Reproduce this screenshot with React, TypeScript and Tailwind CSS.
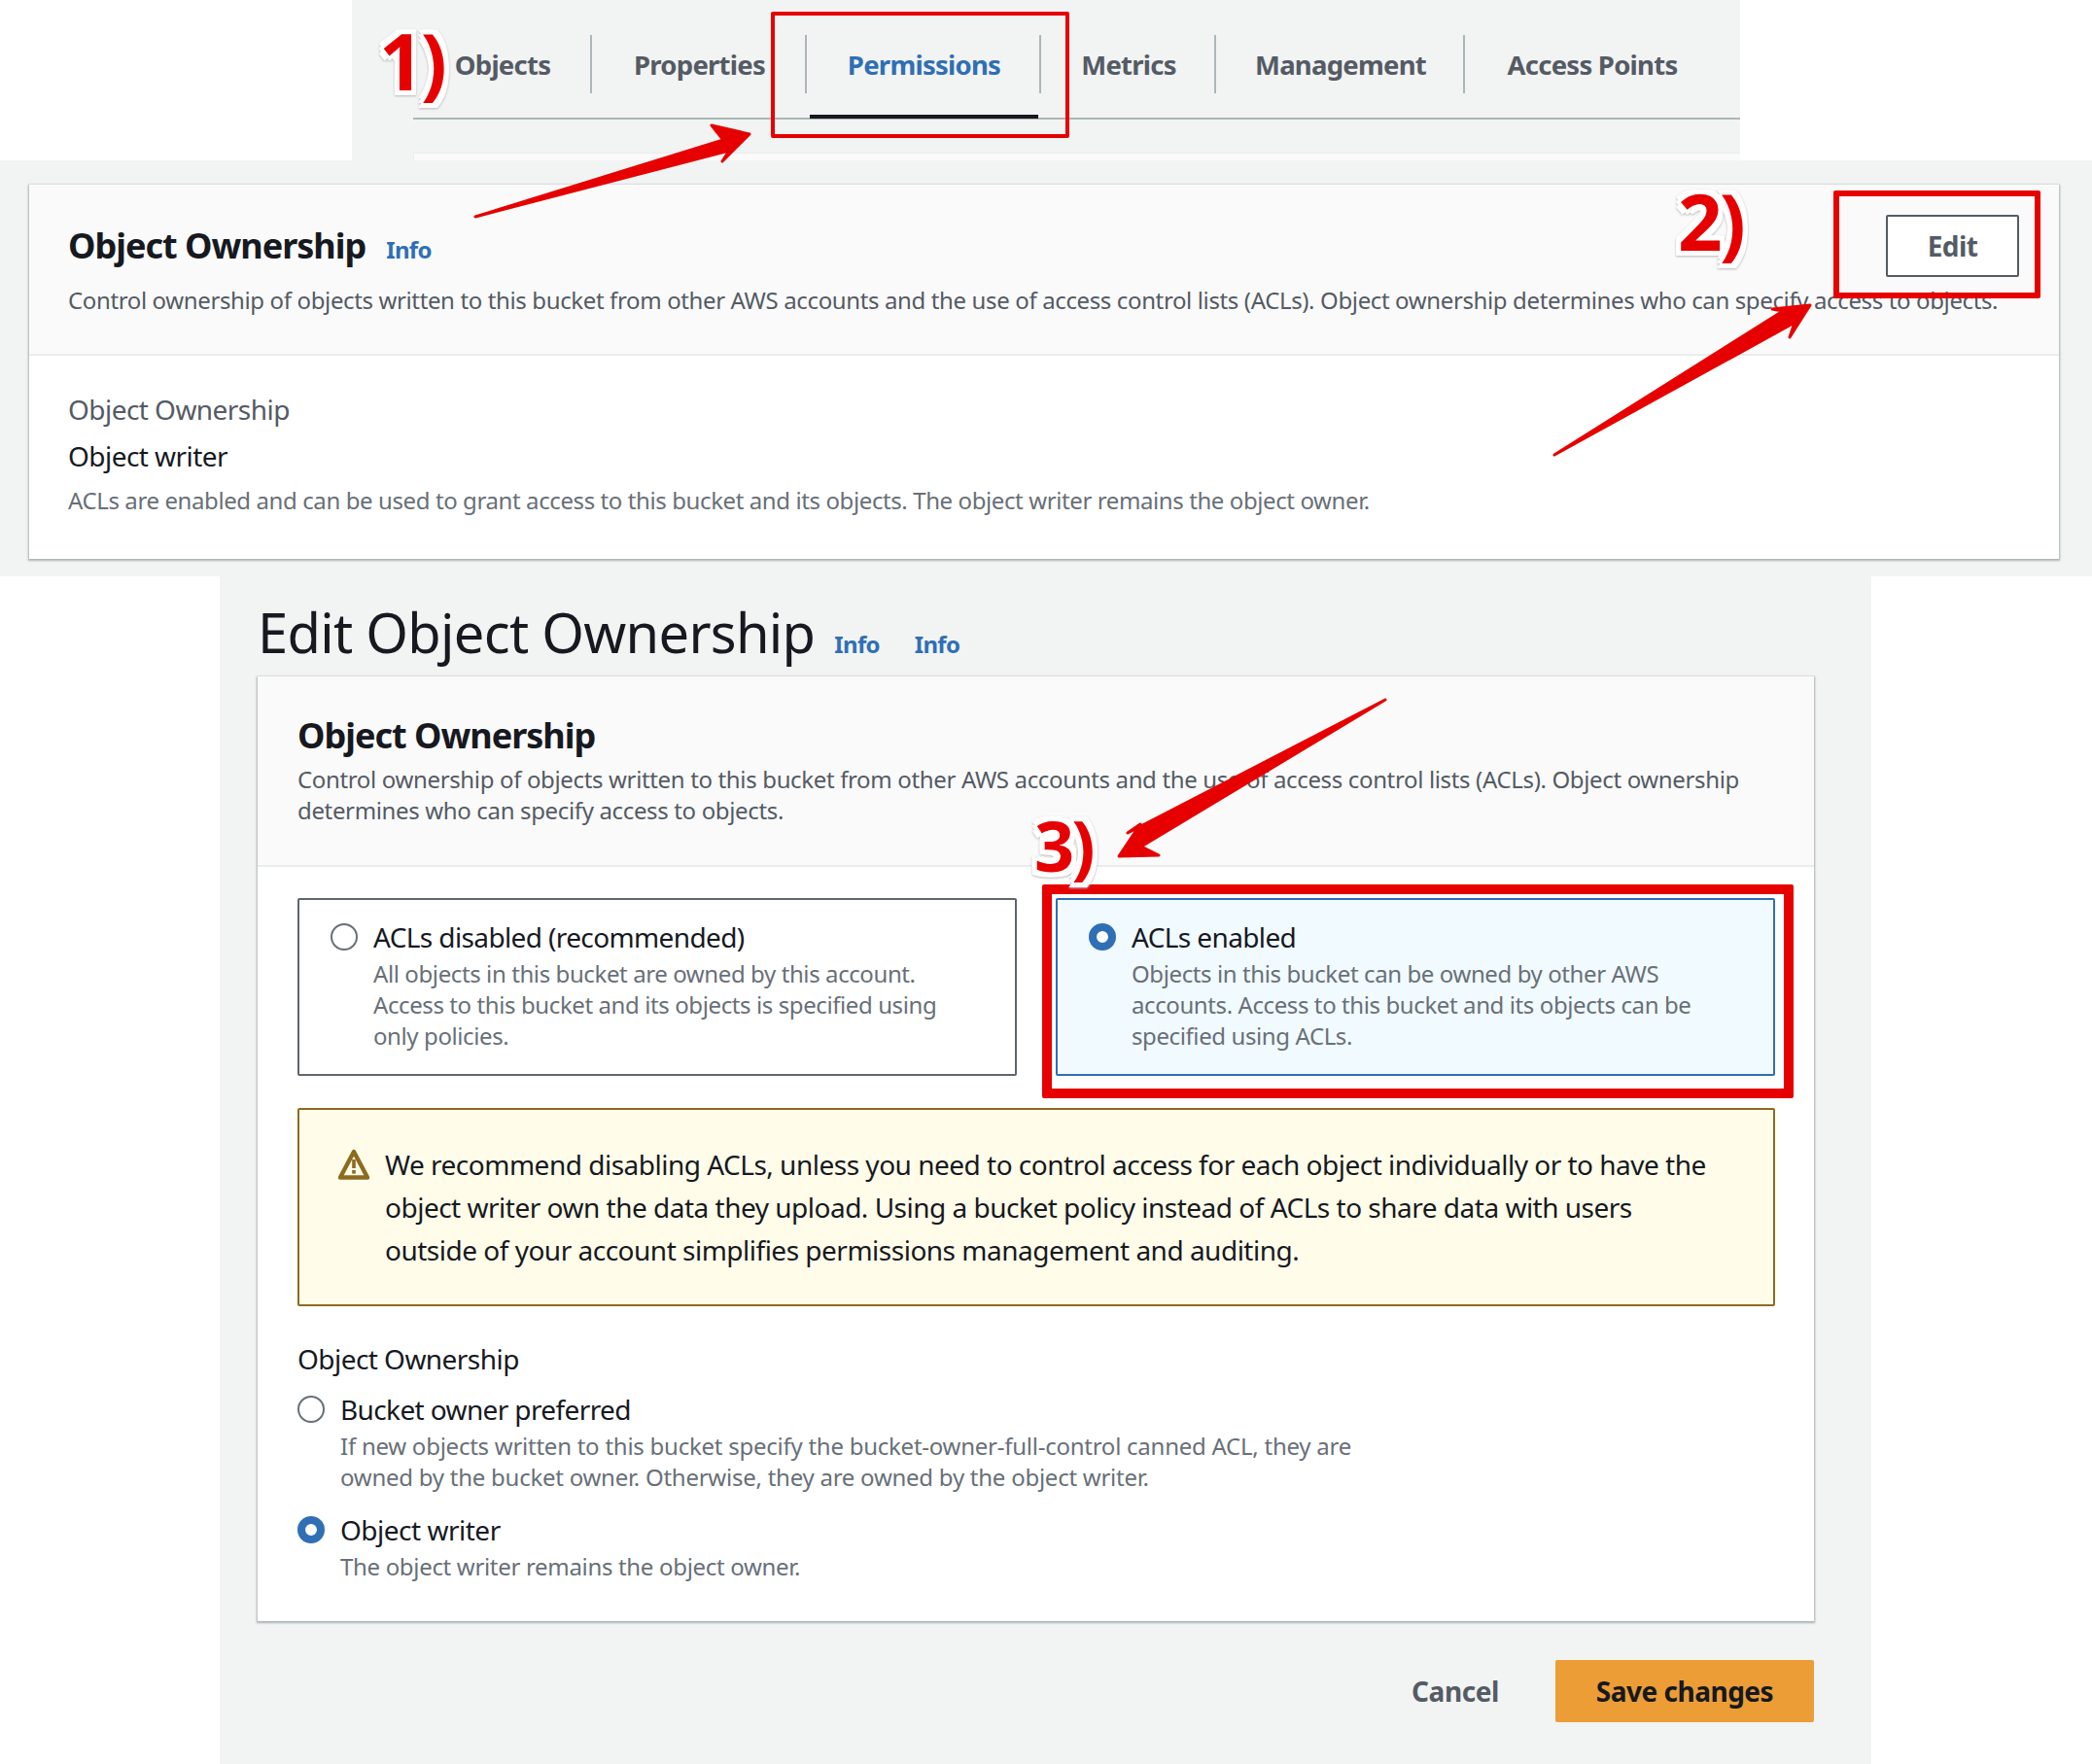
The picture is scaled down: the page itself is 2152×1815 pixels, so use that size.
const font = "font-['Noto_Sans',sans-serif]";

const tabs = [
  { label: "Objects", width: "w-[184px]" },
  { label: "Properties", width: "w-[221px]" },
  { label: "Permissions", width: "w-[241px]" },
  { label: "Metrics", width: "w-[180px]" },
  { label: "Management", width: "w-[256px]" },
  { label: "Access Points", width: "w-[260px]" },
];

function Tabs() {
  return (
    <div className="h-[165px] bg-white">
      <div className="ml-[362px] flex h-full w-[1428px] flex-col bg-[#f2f3f3] pl-[63px]">
        <div className="mt-[36px] flex h-[87px] items-start border-b-2 border-[#aab7b8]">
          {tabs.map((tab, i) => (
            <div
              key={tab.label}
              className={`relative flex h-[60px] items-center justify-center pt-[2px] pl-[2px] text-[27.5px] font-bold tracking-[-0.75px] whitespace-nowrap ${tab.width} ${
                tab.label === "Permissions" ? "text-[#2f6fb5]" : "text-[#545b64]"
              } ${i < tabs.length - 1 ? "border-r-2 border-[#aab7b8]" : ""}`}
            >
              {tab.label}
              {tab.label === "Permissions" && (
                <span className="absolute top-[82px] right-[1px] left-[3px] h-[4px] bg-[#16191f]" />
              )}
            </div>
          ))}
        </div>
        <div className="mt-[34px] h-[8px] flex-1 border-t border-l border-[#eaeded] bg-[#fafafa]" />
      </div>
    </div>
  );
}

function Info({ className = "" }: { className?: string }) {
  return <span className={`text-[24px] font-bold tracking-[-0.7px] text-[#2f6fb5] ${className}`}>Info</span>;
}

function SummaryCard() {
  return (
    <div className="h-[428px] bg-[#f2f3f3] pt-[25px] pr-[34px] pl-[30px]">
      <div className="h-[385px] bg-white shadow-[0_1px_2px_1px_rgba(0,28,36,0.3)]">
        <div className="relative h-[176px] border-b-2 border-[#eaeded] bg-[#fafafa] pt-[36px] pl-[40px]">
          <div className="flex items-baseline">
            <h2 className="text-[36px] font-bold tracking-[-1px] text-[#16191f]">Object Ownership</h2>
            <Info className="ml-[21px]" />
          </div>
          <p className="mt-[13px] text-[24px] leading-[32px] tracking-[-0.37px] whitespace-nowrap text-[#545b64]">
            Control ownership of objects written to this bucket from other AWS accounts and the use of access control
            lists (ACLs). Object ownership determines who can specify access to objects.
          </p>
          <button className="absolute top-[31px] right-[41px] h-[64px] w-[137px] rounded-[2px] border-2 border-[#545b64] bg-white text-[28px] font-bold tracking-[-0.6px] text-[#545b64]">
            Edit
          </button>
        </div>
        <div className="pt-[36px] pl-[40px]">
          <p className="text-[28px] leading-[38px] tracking-[-0.55px] text-[#545b64]">Object Ownership</p>
          <p className="mt-[10px] text-[28px] leading-[38px] tracking-[-0.55px] text-[#16191f]">Object writer</p>
          <p className="mt-[11px] text-[24px] leading-[32px] tracking-[-0.4px] text-[#687078]">
            ACLs are enabled and can be used to grant access to this bucket and its objects. The object writer remains
            the object owner.
          </p>
        </div>
      </div>
    </div>
  );
}

function Radio({ checked }: { checked?: boolean }) {
  if (checked) {
    return <span className="block h-[28px] w-[28px] shrink-0 rounded-full border-[8px] border-[#2f6fb5] bg-white" />;
  }
  return <span className="block h-[28px] w-[28px] shrink-0 rounded-full border-2 border-[#687078] bg-white" />;
}

function Tile({ title, checked, lines }: { title: string; checked?: boolean; lines: string[] }) {
  return (
    <div
      className={`h-[183px] flex-1 rounded-[2px] border-2 pt-[20px] pl-[32px] ${
        checked ? "border-[#2f6fb5] bg-[#f1faff]" : "border-[#60666e] bg-white"
      }`}
    >
      <div className="flex items-center gap-[16px]">
        <Radio checked={checked} />
        <span className="text-[28px] leading-[36px] tracking-[-0.62px] text-[#16191f]">{title}</span>
      </div>
      <div className="mt-[4px] pl-[44px] text-[24px] leading-[32px] tracking-[-0.4px] text-[#687078]">
        {lines.map((l) => (
          <p key={l}>{l}</p>
        ))}
      </div>
    </div>
  );
}

function WarningIcon() {
  return (
    <svg viewBox="0 0 32 32" className="mt-[6px] h-[32px] w-[32px] shrink-0">
      <path d="M16 3 L30 29.5 L2 29.5 Z" fill="none" stroke="#8d6b1f" strokeWidth="4.4" strokeLinejoin="round" />
      <rect x="14.2" y="11" width="3.6" height="9" fill="#8d6b1f" />
      <rect x="14.2" y="22" width="3.6" height="3.6" fill="#8d6b1f" />
    </svg>
  );
}

function EditCard() {
  return (
    <div className="h-[972px] bg-white shadow-[0_1px_2px_1px_rgba(0,28,36,0.3)]">
      <div className="h-[196px] border-b-2 border-[#eaeded] bg-[#fafafa] pt-[36px] pl-[41px]">
        <h2 className="text-[36px] leading-[50px] font-bold tracking-[-1px] text-[#16191f]">Object Ownership</h2>
        <p className="mt-[4px] w-[1520px] text-[24px] leading-[32px] tracking-[-0.35px] text-[#545b64]">
          Control ownership of objects written to this bucket from other AWS accounts and the use of access control
          lists (ACLs). Object ownership determines who can specify access to objects.
        </p>
      </div>
      <div className="pt-[32px] pr-[40px] pl-[41px]">
        <div className="flex gap-[40px]">
          <Tile
            title="ACLs disabled (recommended)"
            lines={[
              "All objects in this bucket are owned by this account.",
              "Access to this bucket and its objects is specified using",
              "only policies.",
            ]}
          />
          <Tile
            checked
            title="ACLs enabled"
            lines={[
              "Objects in this bucket can be owned by other AWS",
              "accounts. Access to this bucket and its objects can be",
              "specified using ACLs.",
            ]}
          />
        </div>
        <div className="mt-[33px] flex h-[204px] gap-[16px] rounded-[2px] border-2 border-[#8d6b1f] bg-[#fffce9] pt-[34px] pl-[40px]">
          <WarningIcon />
          <p className="text-[28px] leading-[44px] tracking-[-0.5px] text-[#16191f]">
            We recommend disabling ACLs, unless you need to control access for each object individually or to have the
            <br />
            object writer own the data they upload. Using a bucket policy instead of ACLs to share data with users
            <br />
            outside of your account simplifies permissions management and auditing.
          </p>
        </div>
        <p className="mt-[35px] text-[28px] leading-[38px] tracking-[-0.55px] text-[#16191f]">Object Ownership</p>
        <div className="mt-[14px] flex items-center gap-[16px]">
          <Radio />
          <span className="text-[28px] leading-[38px] tracking-[-0.62px] text-[#16191f]">Bucket owner preferred</span>
        </div>
        <div className="mt-[3px] pl-[44px] text-[24px] leading-[32px] tracking-[-0.25px] text-[#687078]">
          <p>If new objects written to this bucket specify the bucket-owner-full-control canned ACL, they are</p>
          <p>owned by the bucket owner. Otherwise, they are owned by the object writer.</p>
        </div>
        <div className="mt-[19px] flex items-center gap-[16px]">
          <Radio checked />
          <span className="text-[28px] leading-[38px] tracking-[-0.5px] text-[#16191f]">Object writer</span>
        </div>
        <p className="mt-[3px] pl-[44px] text-[24px] leading-[32px] tracking-[-0.32px] text-[#687078]">
          The object writer remains the object owner.
        </p>
      </div>
    </div>
  );
}

function EditPage() {
  return (
    <div className="h-[1222px] bg-white">
      <div className="ml-[226px] h-full w-[1699px] bg-[#f2f3f3] pr-[59px] pl-[39px]">
        <div className="flex h-[103px] items-baseline pt-[15px]">
          <h1 className="text-[56px] tracking-[-0.7px] text-[#16191f]">Edit Object Ownership</h1>
          <Info className="ml-[20px]" />
          <Info className="ml-[36px]" />
        </div>
        <EditCard />
        <div className="mt-[40px] flex items-center justify-end">
          <span className="text-[28px] font-bold tracking-[-0.4px] text-[#545b64]">Cancel</span>
          <button className="ml-[58px] h-[64px] w-[266px] rounded-[2px] bg-[#ec9d36] text-[28px] font-bold tracking-[-0.5px] text-[#16191f]">
            Save changes
          </button>
        </div>
      </div>
    </div>
  );
}

const halo =
  "[filter:drop-shadow(5px_0_0_#ffffff)_drop-shadow(-5px_0_0_#ffffff)_drop-shadow(0_5px_0_#ffffff)_drop-shadow(0_-5px_0_#ffffff)_drop-shadow(0_1px_1px_#b8b8b8)]";

function Marks() {
  return (
    <>
      <div className="absolute top-[12px] left-[793px] h-[130px] w-[307px] rounded-[2px] border-[4px] border-[#e60000]" />
      <div className="absolute top-[196px] left-[1886px] h-[111px] w-[213px] rounded-[2px] border-[6px] border-[#e60000]" />
      <div className="absolute top-[910px] left-[1072px] h-[220px] w-[773px] rounded-[2px] border-[10px] border-[#e60000]" />
      <svg className="pointer-events-none absolute inset-0" width="2152" height="1815" viewBox="0 0 2152 1815">
        <g fill="#e60000" stroke="#e60000" strokeWidth="3" strokeLinejoin="round">
          <path d="M489 223 L744 144 L732 129 L771 138 L743 166 L750 155 Z" />
          <path d="M1599 468 L1834 320 L1823 318 L1862 314 L1841 347 L1846 332 Z" />
          <path d="M1425 720 L1174 871 L1192 880 L1151 881 L1173 848 L1160 857 Z" />
        </g>
      </svg>
      <span className={`absolute top-[10px] left-[390px] text-[80px] leading-[104px] font-bold tracking-[-3px] text-[#e60000] ${halo}`}>
        1)
      </span>
      <span className={`absolute top-[175px] left-[1726px] text-[80px] leading-[104px] font-bold tracking-[-3px] text-[#e60000] ${halo}`}>
        2)
      </span>
      <span className={`absolute top-[817px] left-[1064px] text-[72px] leading-[104px] font-bold tracking-[-3px] text-[#e60000] ${halo}`}>
        3)
      </span>
    </>
  );
}

export default function App() {
  return (
    <div className={`relative h-[1815px] w-[2152px] overflow-hidden bg-white ${font}`}>
      <Tabs />
      <SummaryCard />
      <EditPage />
      <Marks />
    </div>
  );
}
